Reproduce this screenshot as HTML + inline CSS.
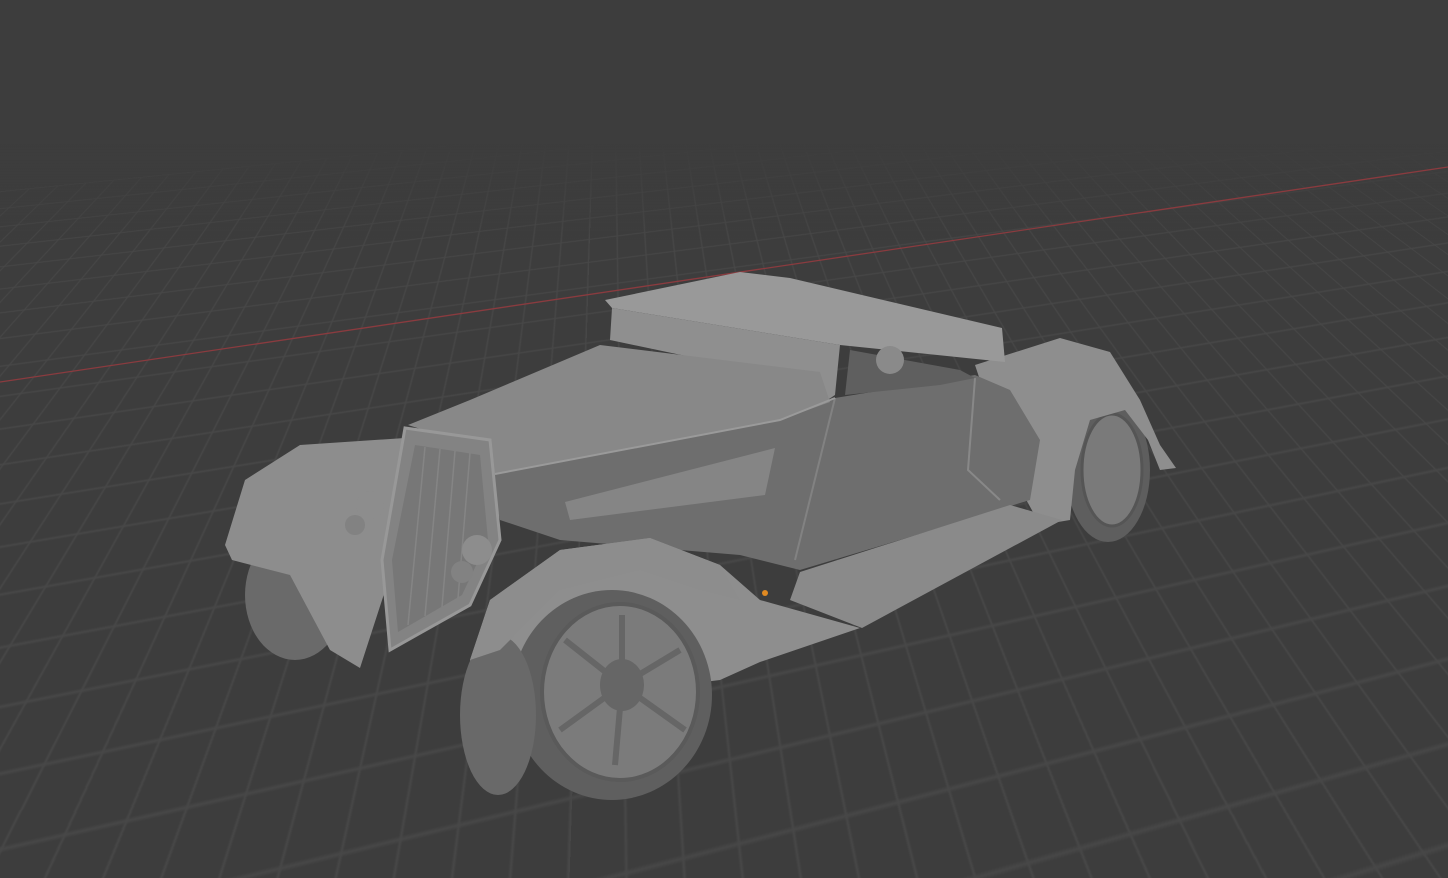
<!DOCTYPE html>
<html><head><meta charset="utf-8"><style>
html,body{margin:0;padding:0;width:1448px;height:878px;overflow:hidden;background:#3d3d3d}
#scene{position:absolute;left:0;top:0;width:1448px;height:878px;perspective:700px;perspective-origin:724px -150px;overflow:hidden}
#plane{position:absolute;left:-2200px;top:120px;width:5800px;height:2600px;
transform-origin:50% 0;transform:rotateX(74deg) rotateZ(-9deg);
background-color:#3d3d3d;
background-image:linear-gradient(#474747 1px,transparent 1px),linear-gradient(90deg,#474747 1px,transparent 1px);
background-size:22px 22px}
#fade{position:absolute;left:0;top:0;width:1448px;height:240px;background:linear-gradient(#3d3d3d 60%,rgba(61,61,61,0))}
svg{position:absolute;left:0;top:0}
</style></head><body>
<div id="scene"><div id="plane"></div></div>
<div id="fade"></div>
<svg width="1448" height="878" viewBox="0 0 1448 878">
<line x1="0" y1="382" x2="1448" y2="167" stroke="#8a3b3f" stroke-width="1.3"/>
<!-- rear wheel -->
<ellipse cx="1108" cy="470" rx="42" ry="72" fill="#5e5e5e"/>
<ellipse cx="1112" cy="470" rx="30" ry="56" fill="#7a7a7a" stroke="#555" stroke-width="3"/>
<!-- front left tire -->
<ellipse cx="295" cy="595" rx="50" ry="65" fill="#6a6a6a"/>
<!-- rear fender -->
<path d="M975,365 L1060,338 L1110,352 L1140,400 L1160,445 L1176,468 L1160,470 L1148,440 L1125,410 L1090,420 L1075,470 L1070,520 L1040,525 L1010,470 Z" fill="#8e8e8e"/>
<!-- body side -->
<path d="M490,472 L780,418 L835,398 L975,375 L1010,390 L1040,440 L1030,500 L900,540 L800,570 L740,555 L560,540 L500,520 Z" fill="#6e6e6e"/>
<path d="M565,502 L775,448 L765,495 L570,520 Z" fill="#858585"/>
<path d="M975,378 L968,470 L1000,500" stroke="#888" stroke-width="2" fill="none"/>
<path d="M835,398 L795,560" stroke="#828282" stroke-width="2" fill="none"/>
<!-- roof -->
<path d="M605,300 L740,272 L790,278 L1002,328 L1005,362 L840,345 L612,308 Z" fill="#999"/>
<!-- interior / windshield -->
<path d="M612,308 L840,345 L835,395 L820,405 L800,380 L610,340 Z" fill="#8f8f8f"/>
<path d="M850,350 L960,370 L975,378 L940,385 L845,395 Z" fill="#5f5f5f"/>
<circle cx="890" cy="360" r="14" fill="#8a8a8a"/>
<!-- hood -->
<path d="M408,425 L470,400 L600,345 L820,372 L830,402 L780,420 L495,474 L455,440 Z" fill="#888"/>
<path d="M495,474 L780,420 L835,398" stroke="#9a9a9a" stroke-width="2" fill="none"/>
<!-- running board -->
<path d="M800,572 L1010,505 L1062,520 L862,628 L790,600 Z" fill="#8a8a8a"/>
<!-- front right fender -->
<path d="M470,660 L490,600 L560,550 L650,538 L720,565 L760,600 L860,628 L760,662 L720,680 L640,690 L470,690 Z" fill="#8e8e8e"/>
<!-- front wheel -->
<ellipse cx="612" cy="695" rx="100" ry="105" fill="#5f5f5f"/>
<ellipse cx="620" cy="692" rx="78" ry="88" fill="#7b7b7b" stroke="#5a5a5a" stroke-width="4"/>
<g stroke="#666" stroke-width="6">
<line x1="622" y1="685" x2="622" y2="615"/><line x1="622" y1="685" x2="680" y2="650"/>
<line x1="622" y1="685" x2="685" y2="730"/><line x1="622" y1="685" x2="615" y2="765"/>
<line x1="622" y1="685" x2="560" y2="730"/><line x1="622" y1="685" x2="565" y2="640"/></g>
<ellipse cx="622" cy="685" rx="22" ry="26" fill="#666"/>
<ellipse cx="498" cy="715" rx="38" ry="80" fill="#696969"/>
<path d="M470,660 L490,600 L560,550 L650,538 L720,565 L740,600 L700,590 L640,570 L560,590 L500,650 Z" fill="#8d8d8d"/>
<!-- left fender -->
<path d="M225,545 L245,480 L300,445 L405,438 L395,560 L360,668 L330,650 L290,575 L232,560 Z" fill="#8d8d8d"/>
<!-- grille -->
<path d="M405,428 L490,440 L500,540 L470,605 L390,650 L382,560 Z" fill="#838383" stroke="#989898" stroke-width="3"/>
<path d="M415,445 L480,455 L488,540 L462,595 L398,632 L392,560 Z" fill="#777"/>
<g stroke="#858585" stroke-width="1.5">
<line x1="425" y1="447" x2="408" y2="625"/><line x1="440" y1="449" x2="425" y2="616"/>
<line x1="455" y1="451" x2="442" y2="607"/><line x1="470" y1="453" x2="458" y2="598"/></g>
<!-- headlights -->
<circle cx="370" cy="505" r="14" fill="#8d8d8d"/>
<circle cx="355" cy="525" r="10" fill="#828282"/>
<circle cx="477" cy="550" r="15" fill="#8d8d8d"/>
<circle cx="462" cy="572" r="11" fill="#828282"/>
<circle cx="765" cy="593" r="3" fill="#e08a22"/>
</svg>
</body></html>
